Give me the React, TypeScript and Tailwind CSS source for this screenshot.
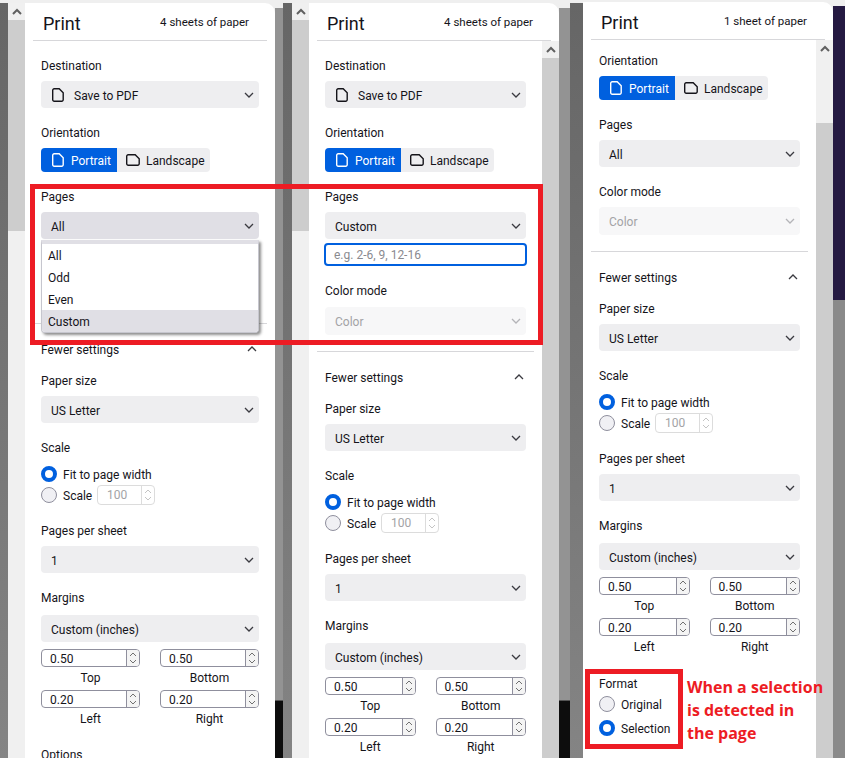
import React from 'react';

const ChevronDown = ({ disabled }: { disabled?: boolean }) => (
  <svg width="10" height="6" viewBox="0 0 10 6" fill="none" className={disabled ? 'text-[#b4b4b8]' : 'text-[#3a3a40]'}>
    <path d="M1 1l4 4 4-4" stroke="currentColor" strokeWidth="1.3" />
  </svg>
);

const ChevronUp = () => (
  <svg width="10" height="6" viewBox="0 0 10 6" fill="none" className="text-[#3a3a40]">
    <path d="M1 5l4-4 4 4" stroke="currentColor" strokeWidth="1.3" />
  </svg>
);

const ScrollArrow = () => (
  <svg width="10" height="7" viewBox="0 0 10 7" fill="none" className="text-[#606060]">
    <path d="M1 6l4-4 4 4" stroke="currentColor" strokeWidth="2" />
  </svg>
);

const PortraitIcon = ({ className }: { className: string }) => (
  <svg width="12" height="14" viewBox="0 0 12 14" fill="none" className={className}>
    <path d="M2.2.8h5l4 4v6.9a1.5 1.5 0 0 1-1.5 1.5H2.2A1.5 1.5 0 0 1 .7 11.7V2.3A1.5 1.5 0 0 1 2.2.8z" stroke="currentColor" strokeWidth="1.4" />
  </svg>
);

const LandscapeIcon = () => (
  <svg width="14" height="12" viewBox="0 0 14 12" fill="none" className="text-[#15141a]">
    <path d="M2.2.8h7l4 4v4.9a1.5 1.5 0 0 1-1.5 1.5H2.2A1.5 1.5 0 0 1 .7 9.7V2.3A1.5 1.5 0 0 1 2.2.8z" stroke="currentColor" strokeWidth="1.4" />
  </svg>
);

const Label = ({ children, className = '' }: { children: React.ReactNode; className?: string }) => (
  <div className={`h-4 leading-[17px] ${className}`}>{children}</div>
);

const Select = ({ value, disabled, open, icon }: { value: string; disabled?: boolean; open?: boolean; icon?: boolean }) => (
  <div
    className={`flex items-center justify-between rounded-[4px] pl-[10px] pr-[5px] ${disabled ? 'h-[28px] bg-[#f7f7f8] text-[#a3a3a6]' : 'h-[27px]'} ${open ? 'bg-[#e0dfe5]' : ''} ${!disabled && !open ? 'bg-[#eeeef0]' : ''}`}
  >
    <span className="flex items-center gap-[10px]">
      {icon && <PortraitIcon className="text-[#15141a] ml-px" />}
      <span className="pt-[2px]">{value}</span>
    </span>
    <ChevronDown disabled={disabled} />
  </div>
);

const Field = ({ label, children, mt = 'mt-[7px]', className = '' }: { label: string; children: React.ReactNode; mt?: string; className?: string }) => (
  <div className={`mt-[17px] ${className}`}>
    <Label>{label}</Label>
    <div className={mt}>{children}</div>
  </div>
);

const Orientation = () => (
  <div className="flex h-6 w-fit rounded-[4px] bg-[#eeeef0]">
    <div className="flex w-[76px] items-center gap-[7px] rounded-l-[4px] bg-[#0060df] pl-[11px] text-white">
      <PortraitIcon className="text-white" />
      <span className="pt-[2px]">Portrait</span>
    </div>
    <div className="flex w-[93px] items-center gap-[6px] pl-[9px]">
      <LandscapeIcon />
      <span className="pt-[2px]">Landscape</span>
    </div>
  </div>
);

const Radio = ({ checked }: { checked?: boolean }) => (
  <span className={`h-4 w-4 shrink-0 rounded-full ${checked ? 'border-4 border-[#0060df] bg-white' : 'border border-[#8f8f9d] bg-[#f0f0f4]'}`} />
);

const RadioRow = ({ checked, label, className = '' }: { checked?: boolean; label: string; className?: string }) => (
  <div className={`flex h-4 items-center gap-[6px] ${className}`}>
    <Radio checked={checked} />
    <span className="pt-[2px]">{label}</span>
  </div>
);

const Spin = ({ faint }: { faint?: boolean }) => (
  <svg width="8" height="14" viewBox="0 0 8 14" fill="none" className={faint ? 'text-[#c4c4c4]' : 'text-[#707070]'}>
    <path d="M1 5l3-3 3 3M1 9l3 3 3-3" stroke="currentColor" strokeWidth="1" />
  </svg>
);

const MarginInput = ({ value, label }: { value: string; label: string }) => (
  <div>
    <div className="flex h-[18px] items-center overflow-hidden rounded-[4px] border border-[#8f8f9d]">
      <span className="flex-1 pl-2 pt-[2px]">{value}</span>
      <span className="flex h-full w-[13px] items-center justify-center border-l border-[#8f8f9d] bg-[#f4f4f4]">
        <Spin />
      </span>
    </div>
    <Label className="mt-[3px] text-center">{label}</Label>
  </div>
);

type ColumnProps = {
  sheets: string;
  pages: 'open' | 'custom' | 'all';
  destination?: boolean;
  format?: boolean;
  options?: boolean;
  scrollbar?: boolean;
  className?: string;
};

const PrintPanel = ({ sheets, pages, destination, format, options, scrollbar, className = '' }: ColumnProps) => (
  <div className={`flex w-[250px] shrink-0 flex-col rounded-tr-[10px] bg-white ${className}`}>
    <div className="mx-2 flex h-[38px] shrink-0 items-center justify-between border-b border-[#d7d7da] pl-[10px] pr-[18px] pt-[3px]">
      <span className="text-[18px]">Print</span>
      <span className="text-[11.5px]">{sheets}</span>
    </div>
    <div className="flex flex-1">
      <div className="flex-1 px-4">
        {destination ? (
          <Field label="Destination">
            <Select value="Save to PDF" icon />
          </Field>
        ) : (
          <div className="h-[13px]" />
        )}
        {destination ? (
          <Field label="Orientation">
            <Orientation />
          </Field>
        ) : (
          <div>
            <Label>Orientation</Label>
            <div className="mt-[7px]">
              <Orientation />
            </div>
          </div>
        )}
        <Field label="Pages">
          <div className="relative">
            <Select value={pages === 'custom' ? 'Custom' : 'All'} open={pages === 'open'} />
            {pages === 'open' && (
              <div className="absolute left-0 right-0 top-[28px] z-10 overflow-hidden rounded-b-[4px] border border-[#c6c6ce] border-t-[4px] border-t-[#e0dfe5] bg-white shadow-[2px_2px_3px_rgba(0,0,0,0.45)]">
                {['All', 'Odd', 'Even', 'Custom'].map((item) => (
                  <div key={item} className={`h-[22px] pl-[6px] leading-[24px] ${item === 'Custom' ? 'bg-[#e0dfe5]' : ''}`}>
                    {item}
                  </div>
                ))}
              </div>
            )}
          </div>
          {pages === 'custom' && (
            <div className="mt-1 -mx-px flex h-[23px] items-center rounded-[4px] border-2 border-[#0060df] pl-2 text-[#8a8a8f]">
              e.g. 2-6, 9, 12-16
            </div>
          )}
        </Field>
        <Field label="Color mode" mt={pages === 'custom' ? 'mt-2' : 'mt-[7px]'} className={pages === 'open' ? 'invisible' : ''}>
          <Select value="Color" disabled />
        </Field>
        <div className="-mx-2 mt-4 border-b border-[#d7d7da]" />
        <div className="mt-[17px] flex h-4 items-center justify-between pr-[2px]">
          <span className="pt-px">Fewer settings</span>
          <ChevronUp />
        </div>
        <div className="-mt-px">
          <Field label="Paper size">
            <Select value="US Letter" />
          </Field>
        </div>
        <Field label="Scale" mt="mt-[10px]">
          <RadioRow checked label="Fit to page width" />
          <div className="mt-[3px] mb-[18px] flex h-5 items-center gap-[6px]">
            <Radio />
            <span className="w-[28px] pt-[2px]">Scale</span>
            <div className="flex h-5 w-[58px] items-center overflow-hidden rounded-[4px] border border-[#dcdcdc] text-[#a3a3a6]">
              <span className="flex-1 pl-[9px]">100</span>
              <span className="flex h-full w-[13px] items-center justify-center border-l border-[#dcdcdc]">
                <Spin faint />
              </span>
            </div>
          </div>
        </Field>
        <Field label="Pages per sheet">
          <Select value="1" />
        </Field>
        <Field label="Margins" mt="mt-[9px]">
          <Select value="Custom (inches)" />
          <div className="mt-[7px] grid grid-cols-2 gap-x-5 gap-y-1">
            <MarginInput value="0.50" label="Top" />
            <MarginInput value="0.50" label="Bottom" />
            <MarginInput value="0.20" label="Left" />
            <MarginInput value="0.20" label="Right" />
          </div>
        </Field>
        {options && <Label className="mt-5">Options</Label>}
        {format && (
          <div className="mt-[21px]">
            <Label>Format</Label>
            <RadioRow label="Original" className="mt-1" />
            <RadioRow checked label="Selection" className="mt-2" />
          </div>
        )}
      </div>
      {scrollbar && <Scrollbar thumbStart={pages === 'custom' ? 'h-0' : 'h-[66px]'} />}
    </div>
  </div>
);

// vertical page scrollbar: arrow cell, light track part, then the grey thumb
const Scrollbar = ({ thumbStart }: { thumbStart: string }) => (
  <div className="flex w-[17px] shrink-0 flex-col bg-[#cdcdcd]">
    <div className="flex h-[17px] items-center justify-center bg-[#f0f0f0]">
      <ScrollArrow />
    </div>
    <div className={`${thumbStart} bg-[#f0f0f0]`} />
  </div>
);

const PreviewScrollbar = () => (
  <div className="mt-[3px] flex w-[17px] shrink-0 flex-col bg-[#f0f0f0]">
    <div className="flex h-[17px] items-center justify-center">
      <ScrollArrow />
    </div>
    <div className="h-[211px] bg-[#cdcdcd]" />
  </div>
);

const DarkStrip = ({ width }: { width: string }) => (
  <div className={`mt-[3px] shrink-0 bg-linear-to-b from-[#666666] to-[#848484] ${width}`} />
);

const PageEdge = ({ width }: { width: string }) => (
  <div className={`mt-2 flex shrink-0 flex-col ${width}`}>
    <div className="h-[693px] border-b border-[#555555] bg-[#939393]" />
    <div className="flex-1 bg-[#0d0d0d]" />
  </div>
);

export default function App() {
  return (
    <div className="relative flex h-[758px] w-[845px] overflow-hidden bg-[#efefef] font-['Roboto','Noto_Sans',sans-serif] text-[12px] text-[#15141a]">
      <DarkStrip width="w-2" />
      <PreviewScrollbar />
      <PrintPanel className="mt-[3px]" sheets="4 sheets of paper" pages="open" destination options />
      <PageEdge width="w-2" />
      <DarkStrip width="w-[9px]" />
      <PreviewScrollbar />
      <PrintPanel className="mt-[3px]" sheets="4 sheets of paper" pages="custom" destination scrollbar />
      <PageEdge width="w-[11px]" />
      <DarkStrip width="w-[13px]" />
      <PrintPanel className="mt-[2px]" sheets="1 sheet of paper" pages="all" format scrollbar />
      <div className="mt-[6px] flex w-3 shrink-0 flex-col bg-[#8a8a8a]">
        <div className="h-[294px] bg-[#251a42]" />
      </div>

      {/* red annotations drawn on top of the screenshot */}
      <div className="absolute left-[30px] top-[184px] z-20 h-[161px] w-[513px] border-[5px] border-[#ed1c24]" />
      <div className="absolute left-[585px] top-[669px] z-20 h-[80px] w-[98px] border-[5px] border-[#ed1c24]" />
      <div className="absolute left-[687px] top-[676px] z-20 w-[150px] font-['Open_Sans',sans-serif] text-[16px] font-bold leading-[23px] text-[#ed1c24]">
        When a selection
        <br />
        is detected in
        <br />
        the page
      </div>
    </div>
  );
}
